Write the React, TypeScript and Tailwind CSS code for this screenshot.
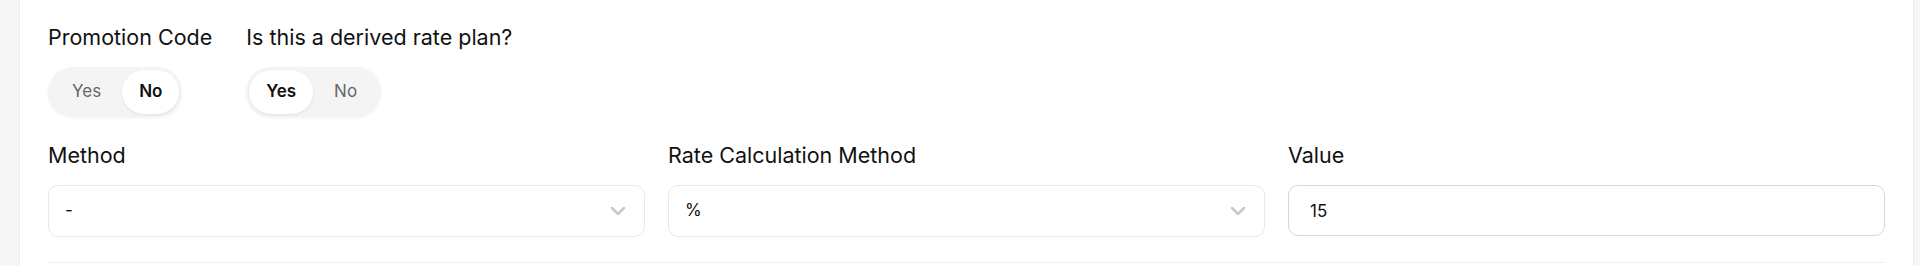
import { useState } from "react";

type ToggleProps = {
    value: boolean;
    onChange: (value: boolean) => void;
};

const classNames = (...values: Array<string | false | undefined>) =>
    values.filter(Boolean).join(" ");

const YesNoToggle = ({ value, onChange }: ToggleProps) => (
    <div className="inline-flex h-[50px] items-center rounded-full bg-[#f4f4f4] p-[3px] shadow-[0_1px_3px_rgba(0,0,0,0.06)]">
        {[true, false].map((option) => (
            <button
                key={option ? "yes" : "no"}
                type="button"
                onClick={() => onChange(option)}
                className={classNames(
                    "h-full rounded-full text-[17px]",
                    value === option
                        ? "bg-white px-[17px] font-semibold text-[#111] shadow-[0_1px_3px_rgba(0,0,0,0.08)]"
                        : "px-[21px] text-[#666]",
                )}
            >
                {option ? "Yes" : "No"}
            </button>
        ))}
    </div>
);

const ChevronDownIcon = () => (
    <svg
        xmlns="http://www.w3.org/2000/svg"
        width="24"
        height="24"
        viewBox="0 0 24 24"
        fill="none"
        stroke="currentColor"
        strokeWidth="2.5"
        strokeLinecap="round"
        strokeLinejoin="round"
        aria-hidden
    >
        <path d="m6 9 6 6 6-6" />
    </svg>
);

const SelectBox = ({ value }: { value: string }) => (
    <div className="flex h-[52px] items-center justify-between rounded-[10px] border border-[#e8e8e8] bg-white pl-[16px] pr-[14px] text-[17px] text-[#111]">
        <span>{value}</span>
        <span className="text-[#c8c8c8]">
            <ChevronDownIcon />
        </span>
    </div>
);

const labelClass = "text-[21.5px] leading-[26px] text-[#111]";

export default function App() {
    const [promo, setPromo] = useState(false);
    const [derived, setDerived] = useState(true);

    return (
        <div
            className="flex h-[266px] bg-[#f6f6f6] pl-[19px] pr-[6px]"
            style={{ fontFamily: "Inter, 'Noto Sans', sans-serif" }}
        >
            <div className="flex-1 border-x border-[#ececec] bg-white px-[28px] pt-[24px]">
                <div className="flex gap-[34px]">
                    <div className="flex flex-col items-start gap-[17px]">
                        <span className={labelClass}>Promotion Code</span>
                        <YesNoToggle value={promo} onChange={setPromo} />
                    </div>
                    <div className="flex flex-col items-start gap-[17px]">
                        <span className={labelClass}>Is this a derived rate plan?</span>
                        <YesNoToggle value={derived} onChange={setDerived} />
                    </div>
                </div>

                <div className="mt-[25px] grid grid-cols-3 gap-x-[23px]">
                    <div className="flex flex-col gap-[17px]">
                        <span className={labelClass}>Method</span>
                        <SelectBox value="-" />
                    </div>
                    <div className="flex flex-col gap-[17px]">
                        <span className={labelClass}>Rate Calculation Method</span>
                        <SelectBox value="%" />
                    </div>
                    <div className="flex flex-col gap-[17px]">
                        <span className={labelClass}>Value</span>
                        <input
                            type="text"
                            defaultValue="15"
                            className="h-[51px] rounded-[10px] border border-[#d6d6d6] bg-white px-[21px] text-[17px] text-[#111] outline-none"
                        />
                    </div>
                </div>

                <div className="mt-[25px] border-t border-[#f0f0f0]" />
            </div>
        </div>
    );
}
